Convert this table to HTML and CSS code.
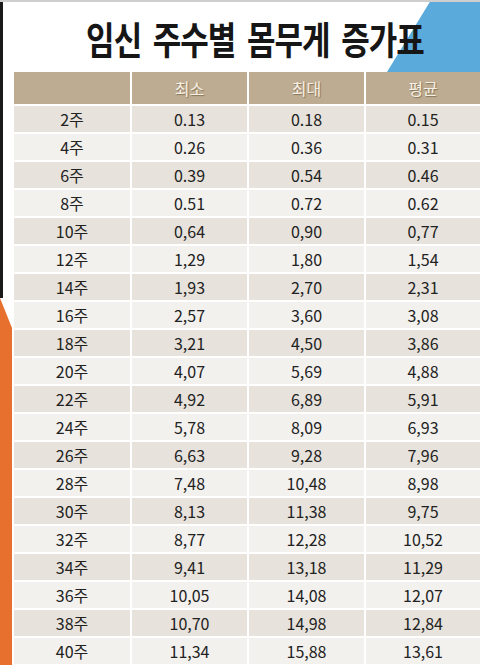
FILE: index.html
```html
<!DOCTYPE html>
<html lang="ko">

<head>
    <meta charset="UTF-8">
    <meta name="viewport" content="width=device-width, initial-scale=1.0">
    <title>임신 주수별 몸무게 증가표</title>
    <link rel="stylesheet" href="styles.css">
</head>

<body>
    <div class="slide">
        <!-- slide decorations -->
        <div class="edge-dark"></div>
        <div class="edge-orange"></div>
        <div class="corner-blue"></div>

        <h1 class="title">임신 주수별 몸무게 증가표</h1>

        <div class="table">
            <div class="cell head"></div>
            <div class="cell head">최소</div>
            <div class="cell head">최대</div>
            <div class="cell head">평균</div>

            <div class="cell">2주</div><div class="cell">0.13</div><div class="cell">0.18</div><div class="cell">0.15</div>
            <div class="cell">4주</div><div class="cell">0.26</div><div class="cell">0.36</div><div class="cell">0.31</div>
            <div class="cell">6주</div><div class="cell">0.39</div><div class="cell">0.54</div><div class="cell">0.46</div>
            <div class="cell">8주</div><div class="cell">0.51</div><div class="cell">0.72</div><div class="cell">0.62</div>
            <div class="cell">10주</div><div class="cell">0,64</div><div class="cell">0,90</div><div class="cell">0,77</div>
            <div class="cell">12주</div><div class="cell">1,29</div><div class="cell">1,80</div><div class="cell">1,54</div>
            <div class="cell">14주</div><div class="cell">1,93</div><div class="cell">2,70</div><div class="cell">2,31</div>
            <div class="cell">16주</div><div class="cell">2,57</div><div class="cell">3,60</div><div class="cell">3,08</div>
            <div class="cell">18주</div><div class="cell">3,21</div><div class="cell">4,50</div><div class="cell">3,86</div>
            <div class="cell">20주</div><div class="cell">4,07</div><div class="cell">5,69</div><div class="cell">4,88</div>
            <div class="cell">22주</div><div class="cell">4,92</div><div class="cell">6,89</div><div class="cell">5,91</div>
            <div class="cell">24주</div><div class="cell">5,78</div><div class="cell">8,09</div><div class="cell">6,93</div>
            <div class="cell">26주</div><div class="cell">6,63</div><div class="cell">9,28</div><div class="cell">7,96</div>
            <div class="cell">28주</div><div class="cell">7,48</div><div class="cell">10,48</div><div class="cell">8,98</div>
            <div class="cell">30주</div><div class="cell">8,13</div><div class="cell">11,38</div><div class="cell">9,75</div>
            <div class="cell">32주</div><div class="cell">8,77</div><div class="cell">12,28</div><div class="cell">10,52</div>
            <div class="cell">34주</div><div class="cell">9,41</div><div class="cell">13,18</div><div class="cell">11,29</div>
            <div class="cell">36주</div><div class="cell">10,05</div><div class="cell">14,08</div><div class="cell">12,07</div>
            <div class="cell">38주</div><div class="cell">10,70</div><div class="cell">14,98</div><div class="cell">12,84</div>
            <div class="cell">40주</div><div class="cell">11,34</div><div class="cell">15,88</div><div class="cell">13,61</div>
        </div>
    </div>
</body>

</html>
```

FILE: styles.css
```css
* {
    margin: 0;
    padding: 0;
    box-sizing: border-box;
}

body {
    font-family: 'Noto Sans CJK KR', 'Noto Sans', sans-serif;
    background: #ffffff;
    color: #222;
    width: 480px;
    height: 665px;
    overflow: hidden;
}

.slide {
    position: relative;
    height: 665px;
    border-top: 2px solid #cfcfcf;
    overflow: hidden;
}

.edge-dark {
    position: absolute;
    left: 0;
    top: 0;
    width: 3px;
    height: 296px;
    background: #1a1a1a;
}

.edge-orange {
    position: absolute;
    left: 0;
    top: 296px;
    width: 12px;
    height: 380px;
    background: #e8702e;
    clip-path: polygon(0 0, 100% 30px, 100% 100%, 0 100%);
}

.corner-blue {
    position: absolute;
    right: 0;
    top: 0;
    width: 93px;
    height: 70px;
    background: #5aaadb;
    clip-path: polygon(46% 0, 100% 0, 100% 100%, 0 100%);
}

.title {
    position: relative;
    height: 70px;
    display: flex;
    align-items: center;
    justify-content: center;
    padding-left: 30px;
    font-size: 31px;
    font-weight: 700;
    letter-spacing: -1px;
    word-spacing: 4px;
    color: #161616;
    transform: scaleY(1.22);
}

.table {
    position: relative;
    margin-left: 14px;
    display: grid;
    grid-template-columns: 116px 115px 115px 1fr;
    grid-template-rows: 32px;
    grid-auto-rows: 26px;
    gap: 2px;
    background: #ffffff;
}

.cell {
    display: flex;
    align-items: center;
    justify-content: center;
    font-size: 16px;
    color: #222;
    background: #e7e3dc;
}

/* alternate row colours: 8 cells per pair of rows */
.cell:nth-child(8n+1),
.cell:nth-child(8n+2),
.cell:nth-child(8n+3),
.cell:nth-child(8n+4) {
    background: #f3f1ee;
}

.cell.head {
    background: #bdac91;
    color: #f6f0e4;
    font-size: 16px;
    text-shadow: 1px 1px 1px rgba(80, 60, 30, 0.5);
}
```
